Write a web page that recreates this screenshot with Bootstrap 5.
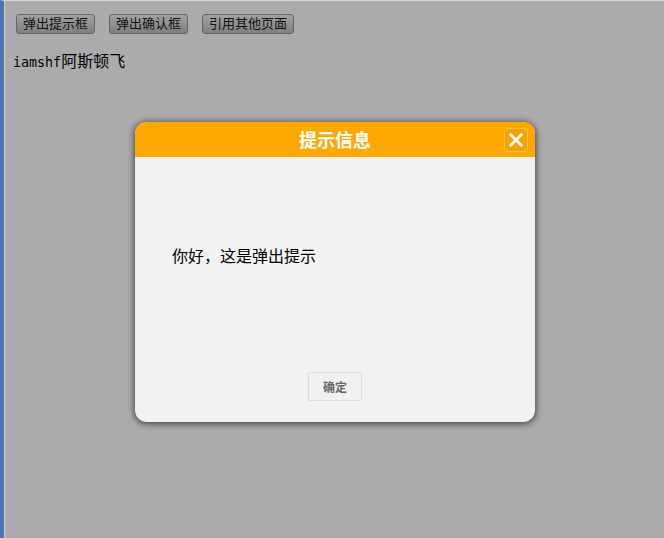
<!DOCTYPE html>
<html lang="zh-CN">
<head>
<meta charset="utf-8">
<title>提示信息</title>
<link rel="stylesheet" href="https://cdn.jsdelivr.net/npm/bootstrap@5.3.0/dist/css/bootstrap.min.css">
<style>
html,body{height:100%;}
body{background:#ababab;color:#000;font-family:"Noto Sans CJK SC","Liberation Sans",sans-serif;overflow:hidden;}
.stage{height:538px;border-left:4px solid #4a76b8;border-top:1px solid #d4d4d4;box-shadow:inset 1px 0 0 #c9ced6;position:relative;padding:13px 0 0 9px;}
.tool-row{gap:14px;padding-left:3px;}
.tool-btn{height:20px;padding:0 6px 3px;font-size:13px;line-height:15px;color:#111;border:1px solid #666;border-radius:3px;background:linear-gradient(#a2a2a2,#7f7f7f);}
.intro{margin:15px 0 0;font-size:16px;line-height:22px;}
.intro-latin{font-family:"DejaVu Sans Mono",monospace;font-size:13.33px;}
.dialog-box{position:absolute;left:131px;top:121px;width:400px;height:300px;background:#f2f2f2;border-radius:12px;box-shadow:0 1px 6px 1px rgba(0,0,0,.6);overflow:hidden;}
.dialog-head{height:35px;background:#ffa800;color:#fff;font-size:18px;font-weight:700;line-height:35px;position:relative;}
.close-box{position:absolute;right:7px;top:6px;width:24px;height:24px;border:1px solid #ffc04d;border-radius:4px;background:#f5a200;padding:0;}
.close-box svg{display:block;margin:3px;}
.dialog-body{padding:86px 37px 0;font-size:16px;line-height:24px;height:215px;}
.dialog-foot{height:50px;}
.ok-btn{width:54px;height:29px;padding:0;font-size:12px;font-weight:700;color:#666;background:#f1f1f1;border:1px solid #ddd;border-radius:2px;}
</style>
</head>
<body>
<div class="stage">
  <div class="d-flex tool-row">
    <button class="tool-btn" type="button">弹出提示框</button>
    <button class="tool-btn" type="button">弹出确认框</button>
    <button class="tool-btn" type="button">引用其他页面</button>
  </div>
  <p class="intro"><span class="intro-latin">iamshf</span>阿斯顿飞</p>
  <div class="dialog-box">
    <div class="dialog-head text-center">提示信息
      <button class="close-box" type="button" aria-label="关闭"><svg width="16" height="16" viewBox="0 0 16 16"><path d="M2.5 2.5L13.5 13.5M13.5 2.5L2.5 13.5" stroke="#fff" stroke-width="2.8" stroke-linecap="round"/></svg></button>
    </div>
    <div class="dialog-body">你好，这是弹出提示</div>
    <div class="dialog-foot d-flex justify-content-center align-items-start">
      <button class="ok-btn" type="button">确定</button>
    </div>
  </div>
</div>
</body>
</html>
